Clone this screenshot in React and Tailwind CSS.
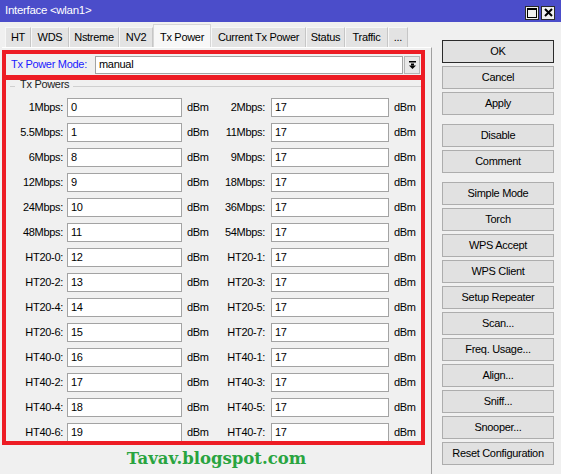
import React from "react";

const rows = [
  ["1Mbps:", "0", "2Mbps:", "17"],
  ["5.5Mbps:", "1", "11Mbps:", "17"],
  ["6Mbps:", "8", "9Mbps:", "17"],
  ["12Mbps:", "9", "18Mbps:", "17"],
  ["24Mbps:", "10", "36Mbps:", "17"],
  ["48Mbps:", "11", "54Mbps:", "17"],
  ["HT20-0:", "12", "HT20-1:", "17"],
  ["HT20-2:", "13", "HT20-3:", "17"],
  ["HT20-4:", "14", "HT20-5:", "17"],
  ["HT20-6:", "15", "HT20-7:", "17"],
  ["HT40-0:", "16", "HT40-1:", "17"],
  ["HT40-2:", "17", "HT40-3:", "17"],
  ["HT40-4:", "18", "HT40-5:", "17"],
  ["HT40-6:", "19", "HT40-7:", "17"],
];

const tabs = [
  ["HT", "w-[26px]"],
  ["WDS", "w-[38px]"],
  ["Nstreme", "w-[50px]"],
  ["NV2", "w-[34px]"],
  ["Tx Power", "w-[58px]", true],
  ["Current Tx Power", "w-[95px]"],
  ["Status", "w-[39px]"],
  ["Traffic", "w-[43px]"],
  ["...", "w-[20px]"],
];

const buttons = [
  ["OK", false, true],
  ["Cancel"],
  ["Apply"],
  ["Disable", true],
  ["Comment"],
  ["Simple Mode", true],
  ["Torch"],
  ["WPS Accept"],
  ["WPS Client"],
  ["Setup Repeater"],
  ["Scan..."],
  ["Freq. Usage..."],
  ["Align..."],
  ["Sniff..."],
  ["Snooper..."],
  ["Reset Configuration"],
];

function Field({ value, w }) {
  return (
    <div className={`${w} h-[19px] bg-white border border-[#a3a3a3] pl-[3px] flex items-center leading-none`}>
      {value}
    </div>
  );
}

export default function App() {
  return (
    <div className="w-[561px] h-[474px] bg-[#f0f0f0] flex flex-col overflow-hidden font-['Liberation_Sans',Arial,sans-serif] text-[11px] tracking-[-0.3px] text-black">
      {/* title bar */}
      <div className="h-[22px] shrink-0 bg-[#4b4dca] flex items-center pl-[5px] pr-[6px]">
        <span className="flex-1 text-white text-[11.5px]">Interface &lt;wlan1&gt;</span>
        <div className="flex gap-[2px] mt-[3px]">
          <div className="w-[14px] h-[14px] bg-[#f0f0f0] border border-[#2a2a2a] flex items-center justify-center">
            <svg width="10" height="10" viewBox="0 0 10 10">
              <rect x="0.5" y="0.5" width="9" height="9" fill="none" stroke="#000" strokeWidth="1" />
              <rect x="0" y="0" width="10" height="2" fill="#000" />
            </svg>
          </div>
          <div className="w-[14px] h-[14px] bg-[#f0f0f0] border border-[#2a2a2a] flex items-center justify-center">
            <svg width="9" height="9" viewBox="0 0 9 9">
              <path d="M1 1 L8 8 M8 1 L1 8" stroke="#000" strokeWidth="2" />
            </svg>
          </div>
        </div>
      </div>

      <div className="flex flex-1 min-h-0">
        {/* left part */}
        <div className="w-[432px] flex flex-col">
          <div className="h-[25px] shrink-0 flex items-end pl-[5px]">
            {tabs.map(([label, w, active]) => (
              <div
                key={label}
                className={
                  active
                    ? `${w} h-[23px] bg-[#f7f7f7] border border-b-0 border-[#d6d6d6] flex items-start justify-center pt-[4px] whitespace-nowrap`
                    : `${w} h-[20px] bg-[#e3e3e3] border border-b-0 border-l-[#f7f7f7] border-t-[#f7f7f7] border-r-[#c6c6c6] flex items-center justify-center whitespace-nowrap`
                }
              >
                {label}
              </div>
            ))}
          </div>

          {/* tab panel */}
          <div className="flex-1 ml-[2px] border-t border-t-white border-r border-r-[#a0a0a0] flex flex-col">
            <div className="mt-[2px] w-[423px] h-[395px] border-[4px] border-[#ed1c24] flex flex-col overflow-hidden">
              {/* mode row */}
              <div className="h-[21px] shrink-0 flex items-center">
                <div className="w-[89px] pl-[5px] text-[#1a1aff] whitespace-nowrap">Tx Power Mode:</div>
                <div className="flex-1 h-[18px] bg-white border border-[#a3a3a3] pl-[3px] flex items-center leading-none">manual</div>
                <div className="w-[16px] h-[18px] ml-[1px] mr-[1px] bg-[#e8e8e8] border border-[#b5b5b5] flex items-center justify-center">
                  <svg width="7" height="8" viewBox="0 0 7 8">
                    <rect x="0" y="0" width="7" height="1.5" fill="#000" />
                    <rect x="2" y="2.5" width="3" height="2" fill="#000" />
                    <polygon points="0,4.5 7,4.5 3.5,8" fill="#000" />
                  </svg>
                </div>
              </div>
              <div className="h-[5px] shrink-0 bg-[#ed1c24]" />

              {/* group */}
              <div className="flex-1 flex flex-col overflow-hidden">
                <div className="h-[12px] -mt-[2px] flex items-start shrink-0">
                  <div className="ml-[4px] w-[5px] h-px bg-[#cfcfcf] mt-[8px]" />
                  <div className="ml-[5px] leading-[12px] text-[#222]">Tx Powers</div>
                  <div className="ml-[4px] flex-1 h-px bg-[#cfcfcf] mt-[8px]" />
                </div>
                <div className="mt-[8px] flex flex-col gap-[6px]">
                  {rows.map(([l1, v1, l2, v2]) => (
                    <div key={l1} className="h-[19px] flex items-center shrink-0">
                      <div className="w-[57px] text-right whitespace-nowrap">{l1}</div>
                      <div className="ml-[4px]">
                        <Field value={v1} w="w-[115px]" />
                      </div>
                      <div className="ml-[5px] w-[21px]">dBm</div>
                      <div className="w-[57px] text-right whitespace-nowrap">{l2}</div>
                      <div className="ml-[6px]">
                        <Field value={v2} w="w-[118px]" />
                      </div>
                      <div className="ml-[5px]">dBm</div>
                    </div>
                  ))}
                </div>
              </div>
            </div>
            <div className="mt-[2px] text-center font-['DejaVu_Serif',serif] font-bold text-[16.5px] tracking-[0px] text-[#29a43f]">
              Tavav.blogspot.com
            </div>
          </div>
        </div>

        {/* buttons */}
        <div className="ml-[10px] mt-[18px] w-[112px] flex flex-col">
          {buttons.map(([label, extra, def], i) => (
            <div
              key={label}
              className={`h-[23px] shrink-0 flex items-center justify-center whitespace-nowrap bg-[#e1e1e1] border ${
                def ? "border-[#2b2b2b]" : "border-[#adadad]"
              } ${i === 0 ? "" : extra ? "mt-[9px]" : "mt-[3px]"}`}
            >
              {label}
            </div>
          ))}
        </div>
      </div>
    </div>
  );
}
